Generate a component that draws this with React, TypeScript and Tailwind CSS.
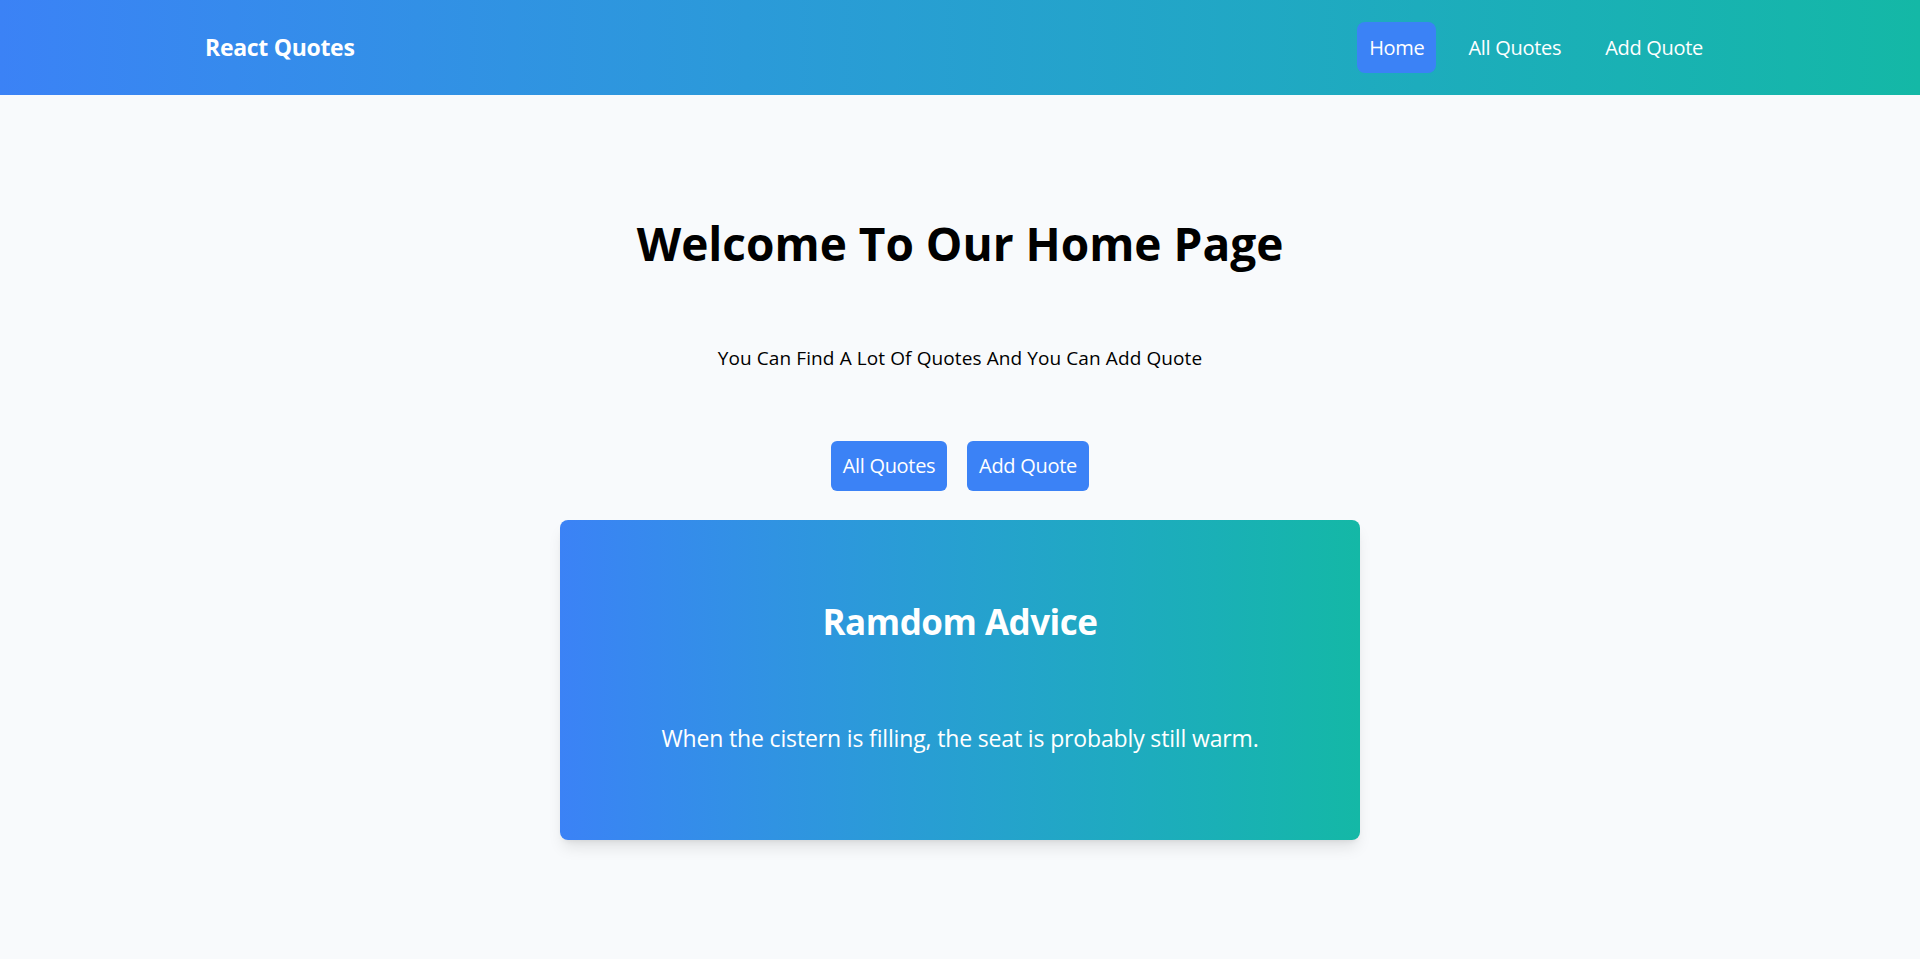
export default function App() {
  const links = [
    { label: "Home", active: true },
    { label: "All Quotes", active: false },
    { label: "Add Quote", active: false },
  ];

  return (
    <div className="min-h-screen bg-[#f8fafc] font-['Open_Sans',sans-serif]">
      {/* top bar */}
      <header className="h-[95px] bg-gradient-to-r from-[#3b82f6] to-[#14b8a6] flex items-center justify-between px-[205px]">
        <a href="#" className="text-white font-bold text-[23px] tracking-[-0.3px]">
          React Quotes
        </a>
        <nav className="flex items-center gap-5">
          {links.map((l) => (
            <a
              key={l.label}
              href="#"
              className={`h-[51px] px-3 flex items-center rounded-lg text-white text-[20px] tracking-[-0.3px] ${
                l.active ? "bg-[#3b82f6]" : ""
              }`}
            >
              {l.label}
            </a>
          ))}
        </nav>
      </header>

      <main className="flex flex-col items-center">
        <h1 className="mt-[125px] text-[46px] leading-none font-bold text-black">
          Welcome To Our Home Page
        </h1>
        <p className="mt-[83px] text-[19px] leading-none text-black tracking-[0.1px]">
          You Can Find A Lot Of Quotes And You Can Add Quote
        </p>
        <div className="mt-[73px] flex gap-5">
          <button className="h-[50px] w-[116px] rounded-md bg-[#3b82f6] text-white text-[20px] tracking-[-0.3px]">
            All Quotes
          </button>
          <button className="h-[50px] w-[122px] rounded-md bg-[#3b82f6] text-white text-[20px] tracking-[-0.3px]">
            Add Quote
          </button>
        </div>

        {/* advice card */}
        <section className="mt-[29px] w-[800px] h-[320px] rounded-lg shadow-lg bg-gradient-to-r from-[#3b82f6] to-[#14b8a6] flex flex-col items-center text-white">
          <h2 className="mt-[84px] text-[35px] leading-none font-bold tracking-[-0.5px]">
            Ramdom Advice
          </h2>
          <p className="mt-[88px] text-[23px] leading-none tracking-[-0.15px]">
            When the cistern is filling, the seat is probably still warm.
          </p>
        </section>
      </main>
    </div>
  );
}
